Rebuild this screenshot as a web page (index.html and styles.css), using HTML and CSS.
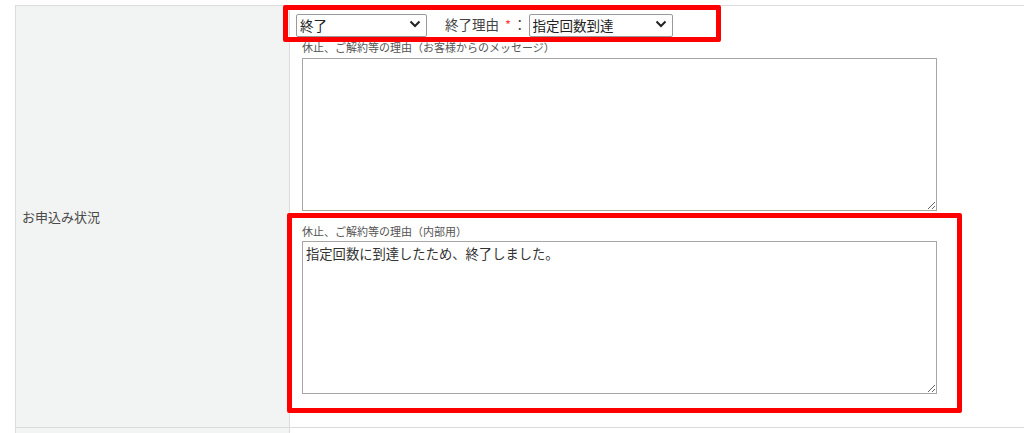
FILE: index.html
```html
<!DOCTYPE html>
<html lang="ja">
<head>
<meta charset="utf-8">
<link rel="stylesheet" href="styles.css">
</head>
<body>
<div class="page">
  <div class="row">
    <div class="head">お申込み状況</div>
    <div class="cell">
      <div class="status-line">
        <div class="sel-wrap sel-status">
          <select class="sel"><option>終了</option></select>
          <svg class="chev" width="12" height="8" viewBox="0 0 12 8"><path d="M1.5 1.5 L6 6 L10.5 1.5" fill="none" stroke="#222" stroke-width="2"/></svg>
        </div>
        <span class="reason-label">終了理由<span class="req">*</span>：</span>
        <div class="sel-wrap sel-reason">
          <select class="sel"><option>指定回数到達</option></select>
          <svg class="chev" width="12" height="8" viewBox="0 0 12 8"><path d="M1.5 1.5 L6 6 L10.5 1.5" fill="none" stroke="#222" stroke-width="2"/></svg>
        </div>
      </div>
      <div class="field field-customer">
        <div class="field-label">休止、ご解約等の理由（お客様からのメッセージ）</div>
        <textarea class="area"></textarea>
      </div>
      <div class="field field-internal">
        <div class="field-label">休止、ご解約等の理由（内部用）</div>
        <textarea class="area">指定回数に到達したため、終了しました。</textarea>
      </div>
    </div>
  </div>
  <div class="row row-next">
    <div class="head"></div>
    <div class="cell"></div>
  </div>
  <div class="mark mark-status"></div>
  <div class="mark mark-internal"></div>
</div>
</body>
</html>
```

FILE: styles.css
```css
html, body {
  margin: 0;
  padding: 0;
  background: #ffffff;
}
body {
  font-family: "Noto Sans CJK JP", "Noto Sans", sans-serif;
  color: #333;
  overflow: hidden;
}
.page {
  position: relative;
  padding-top: 5px;
  padding-left: 15px;
}
.row {
  display: grid;
  grid-template-columns: 275px 1fr;
  border-top: 1px solid #dcdcdc;
}
.row:first-child {
  border-bottom: 1px solid #dcdcdc;
}
.head {
  background: #f2f4f3;
  border-left: 1px solid #dcdcdc;
  border-right: 1px solid #dcdcdc;
  display: flex;
  align-items: center;
  padding-left: 6px;
  font-size: 13px;
  color: #4a4a4a;
}
.cell {
  background: #fff;
  padding: 6px 0 33px 6px;
}
.row-next {
  border-top: none;
  height: 10px;
}
.row-next .cell {
  padding: 0;
}
.status-line {
  display: flex;
  align-items: center;
  height: 23px;
}
.sel-wrap {
  position: relative;
  height: 23px;
}
.sel {
  -webkit-appearance: none;
  appearance: none;
  box-sizing: border-box;
  width: 100%;
  height: 23px;
  margin: 0;
  font-family: "Noto Sans CJK JP", sans-serif;
  font-size: 13.5px;
  color: #222;
  border: 1px solid #9a9a9a;
  border-radius: 2px;
  background: #fff;
  padding: 0 3px;
}
.chev {
  position: absolute;
  right: 6px;
  top: 8px;
  pointer-events: none;
}
.sel-status {
  width: 131px;
}
.sel-reason {
  width: 144px;
}
.reason-label {
  margin-left: 18px;
  margin-right: 2px;
  font-size: 13.5px;
  color: #444;
  white-space: nowrap;
}
.req {
  color: #ff3b3b;
  font-size: 13px;
  margin-left: 6px;
  margin-right: 2px;
}
.field {
  margin-left: 6px;
}
.field-label {
  font-size: 11px;
  line-height: 14px;
  color: #555;
  white-space: nowrap;
}
.field-customer .field-label {
  margin-top: 5px;
  margin-bottom: 4px;
}
.field-internal .field-label {
  margin-top: 13px;
  margin-bottom: 3px;
}
.area {
  display: block;
  box-sizing: border-box;
  width: 635px;
  height: 153px;
  margin: 0;
  border: 1px solid #a6a6a6;
  border-radius: 0;
  padding: 2px 3px;
  font-family: "Noto Sans CJK JP", sans-serif;
  font-size: 13.3px;
  line-height: 20px;
  color: #333;
  resize: vertical;
}
.mark {
  position: absolute;
  border: 5px solid #ff0000;
  border-radius: 2px;
  box-sizing: border-box;
  pointer-events: none;
}
.mark-status {
  left: 283px;
  top: 5px;
  width: 438px;
  height: 37px;
}
.mark-internal {
  left: 287px;
  top: 213px;
  width: 675px;
  height: 200px;
}
```
